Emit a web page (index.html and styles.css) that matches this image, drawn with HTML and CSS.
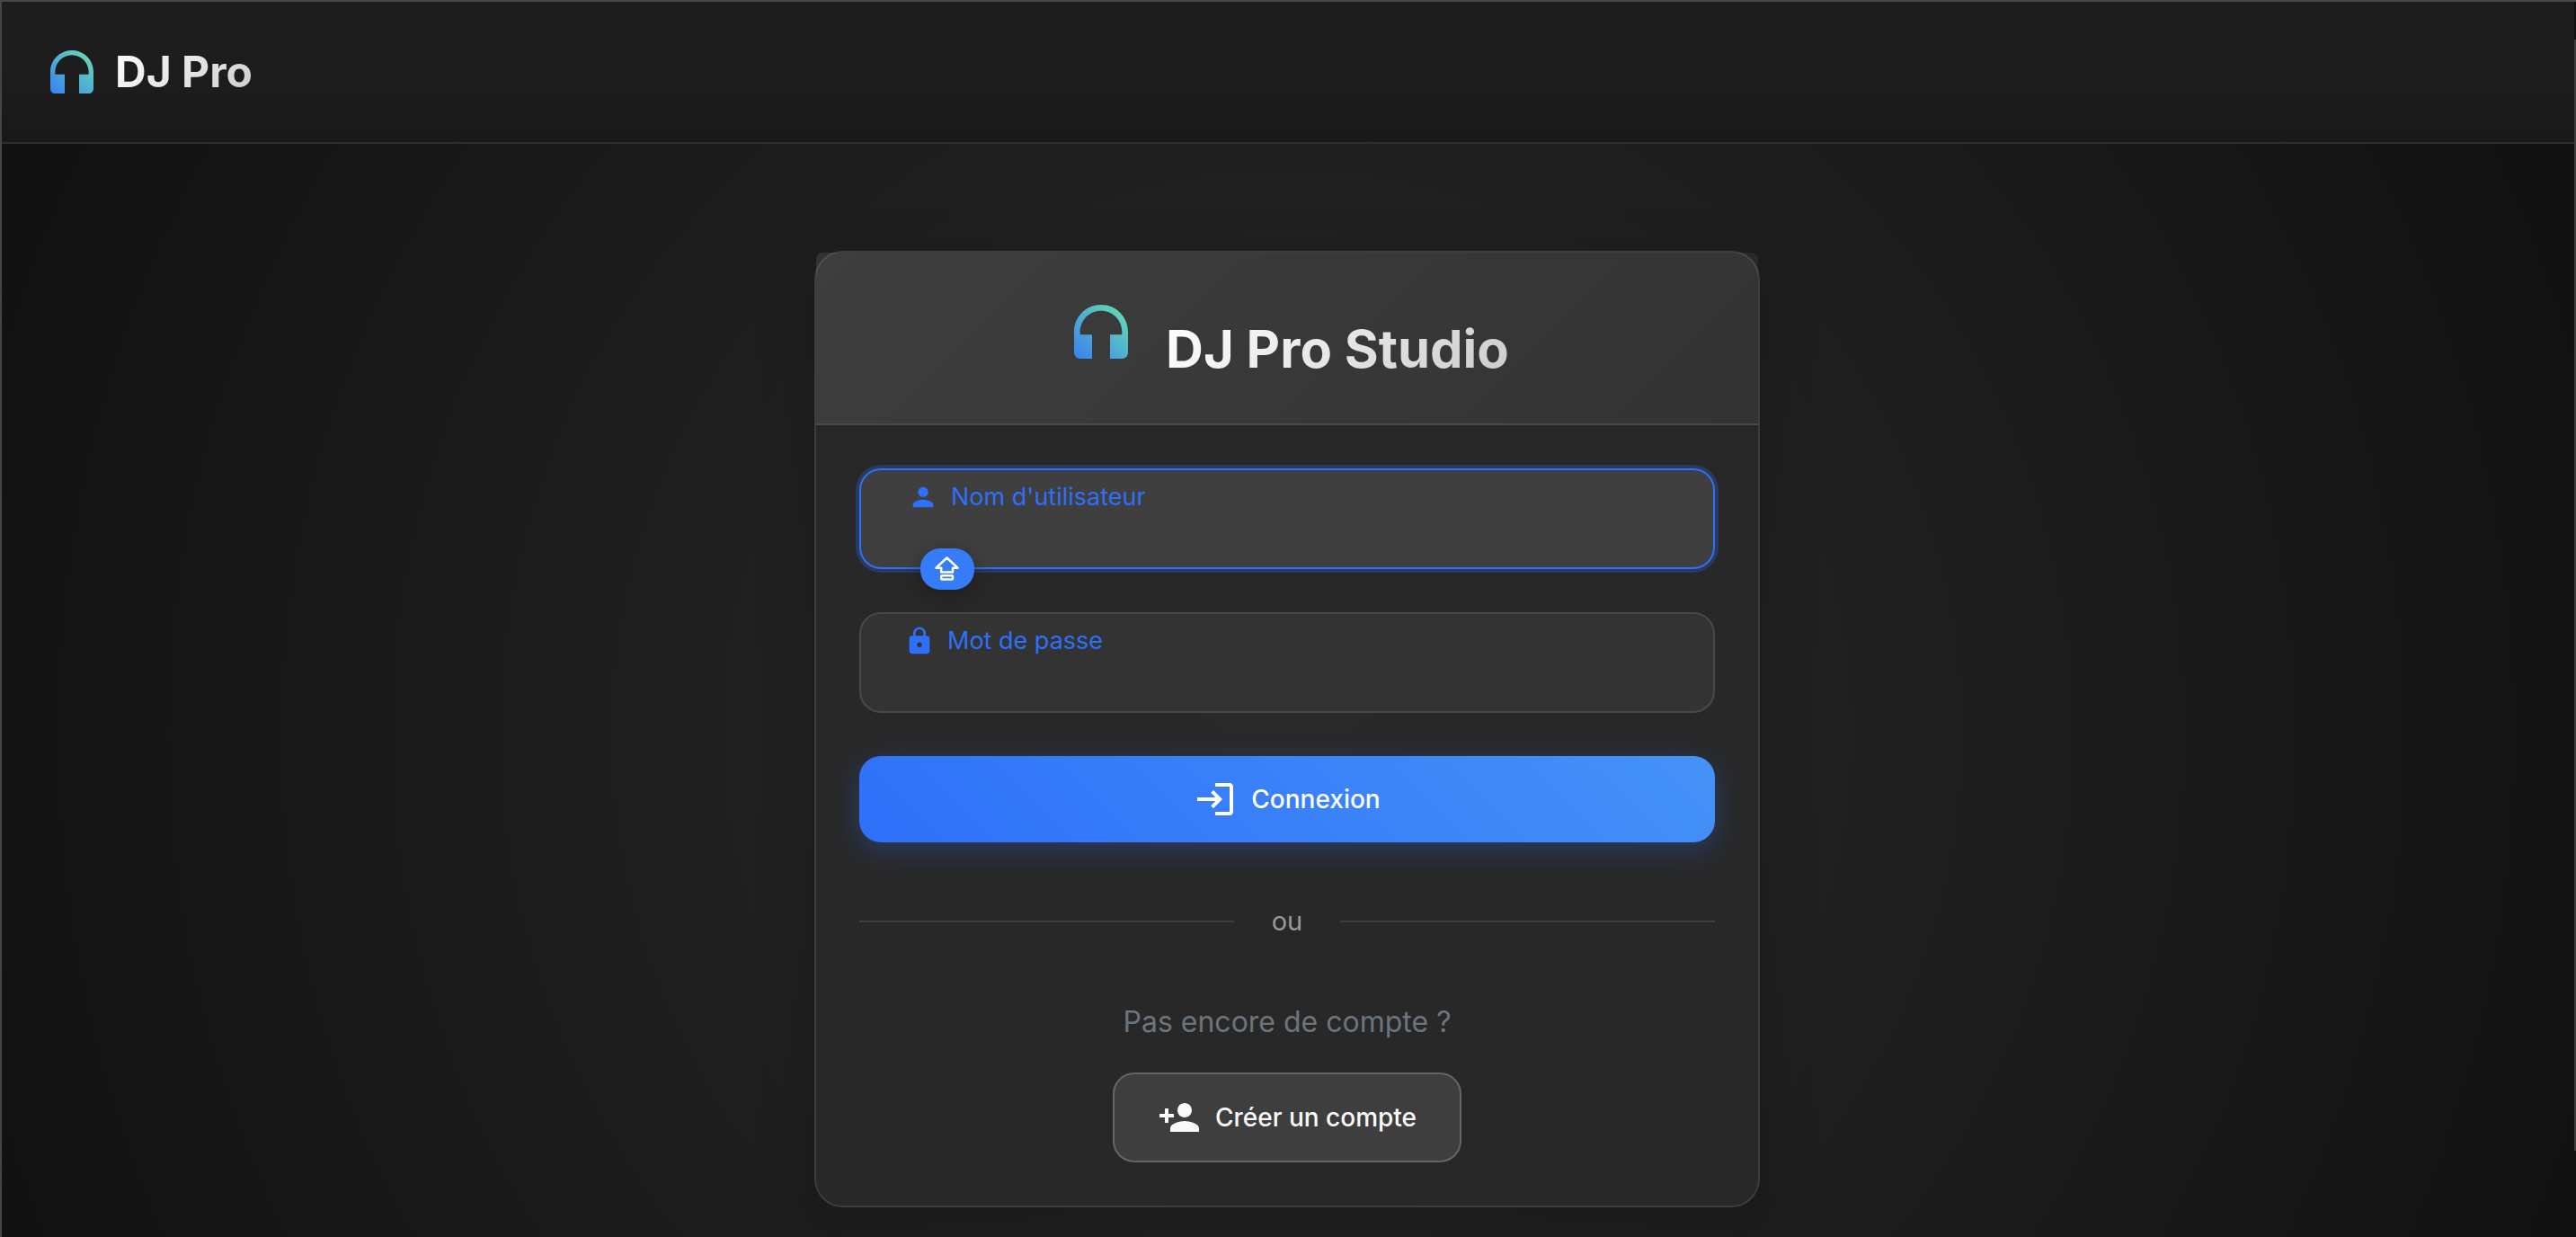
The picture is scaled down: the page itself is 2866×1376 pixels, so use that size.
FILE: index.html
```html
<!DOCTYPE html>
<html lang="fr">
<head>
<meta charset="utf-8">
<meta name="viewport" content="width=device-width, initial-scale=1">
<title>DJ Pro</title>
<link rel="stylesheet" href="styles.css">
</head>
<body>
<svg class="defs" width="0" height="0" aria-hidden="true">
  <defs>
    <linearGradient id="brand" x1="0" y1="1" x2="1" y2="0">
      <stop offset="0" stop-color="#3880f2"/>
      <stop offset="1" stop-color="#68e2ae"/>
    </linearGradient>
    <symbol id="headphones" viewBox="0 0 24 24">
      <path fill="url(#brand)" d="M12 3c-4.97 0-9 4.03-9 9v7c0 1.1.9 2 2 2h4v-8H5v-1c0-3.87 3.13-7 7-7s7 3.13 7 7v1h-4v8h4c1.1 0 2-.9 2-2v-7c0-4.97-4.03-9-9-9z"/>
    </symbol>
  </defs>
</svg>

<header class="topbar">
  <a class="brand" href="#">
    <svg class="brand-icon" aria-hidden="true"><use href="#headphones"/></svg>
    <span class="brand-name">DJ Pro</span>
  </a>
</header>

<main class="page">
  <section class="card">
    <div class="card-header">
      <svg class="card-icon" aria-hidden="true"><use href="#headphones"/></svg>
      <h1 class="card-title">DJ Pro Studio</h1>
    </div>
    <div class="card-body">
      <form class="form">
        <div class="field field-active">
          <input class="input" id="username" type="text" autocomplete="off">
          <label class="label" for="username">
            <svg class="label-icon" viewBox="0 0 24 24" aria-hidden="true"><path d="M12 12c2.21 0 4-1.79 4-4s-1.79-4-4-4-4 1.79-4 4 1.79 4 4 4zm0 2c-2.67 0-8 1.34-8 4v2h16v-2c0-2.66-5.33-4-8-4z"/></svg>
            Nom d'utilisateur
          </label>
          <span class="caps">
            <svg class="caps-icon" viewBox="0 0 28 28" aria-hidden="true"><path d="M13.500 1.500 25.500 12.700H20v4.800H7.200v-4.800H1.500z"/><rect x="7.200" y="21.200" width="12.800" height="4.400" rx="1"/></svg>
          </span>
        </div>
        <div class="field">
          <input class="input" id="password" type="password" autocomplete="off">
          <label class="label" for="password">
            <svg class="label-icon" viewBox="0 0 24 24" aria-hidden="true"><path d="M18 8h-1V6c0-2.760-2.240-5-5-5S7 3.240 7 6v2H6c-1.100 0-2 .9-2 2v10c0 1.100.9 2 2 2h12c1.100 0 2-.9 2-2V10c0-1.100-.9-2-2-2zm-6 9c-1.100 0-2-.9-2-2s.9-2 2-2 2 .9 2 2-.9 2-2 2zm3.100-9H8.900V6c0-1.710 1.390-3.100 3.100-3.100s3.100 1.390 3.100 3.100v2z"/></svg>
            Mot de passe
          </label>
        </div>
        <button class="btn btn-primary" type="submit">
          <svg class="btn-icon" viewBox="0 0 24 24" aria-hidden="true"><path d="M11 7 9.600 8.400l2.600 2.600H2v2h10.200l-2.600 2.600L11 17l5-5zM20 19h-8v2h8c1.100 0 2-.9 2-2V5c0-1.100-.9-2-2-2h-8v2h8z"/></svg>
          Connexion
        </button>
      </form>
      <div class="divider"><span class="divider-text">ou</span></div>
      <div class="signup">
        <p class="signup-text">Pas encore de compte ?</p>
        <button class="btn btn-secondary" type="button">
          <svg class="btn-icon" viewBox="0 0 24 24" aria-hidden="true"><path d="M15 12c2.210 0 4-1.790 4-4s-1.790-4-4-4-4 1.790-4 4 1.790 4 4 4zm-9-2V7H4v3H1v2h3v3h2v-3h3v-2zm9 4c-2.670 0-8 1.340-8 4v2h16v-2c0-2.660-5.330-4-8-4z"/></svg>
          Créer un compte
        </button>
      </div>
    </div>
  </section>
</main>
</body>
</html>
```
FILE: styles.css
```css
*,
*::before,
*::after {
  box-sizing: border-box;
}

html {
  height: 100%;
}

body {
  display: flex;
  flex-direction: column;
  min-height: 100%;
  margin: 0;
  padding-right: 2px;
  background: #111111;
  color: #f8f9fa;
  font-family: Inter, "Liberation Sans", sans-serif;
}

/* Thin window frame laid over the page */
body::after {
  content: "";
  position: fixed;
  inset: 0;
  background:
    linear-gradient(#434a43, #434a43) top / 100% 2px no-repeat,
    linear-gradient(#454545, #454545) left / 2px 100% no-repeat,
    linear-gradient(transparent 44px, #3c3c3c 44px, #3c3c3c calc(100% - 96px), transparent calc(100% - 96px)) right / 2px 100% no-repeat;
  pointer-events: none;
}

.defs {
  position: absolute;
}

.topbar {
  display: flex;
  align-items: center;
  padding: 48px 48px 46px;
  border-bottom: 2px solid #2f2f2f;
  background: linear-gradient(#1d1d1d 50%, #191919);
}

.brand {
  display: flex;
  align-items: center;
  gap: 16px;
  color: inherit;
  text-decoration: none;
}

.brand-icon {
  width: 64px;
  height: 64px;
}

.brand-name,
.card-title {
  background: linear-gradient(135deg, #ffffff, #cccccc);
  background-clip: text;
  color: transparent;
}

.brand-name {
  font-size: 48px;
  font-weight: 700;
  line-height: 64px;
}

.page {
  flex: 1;
  display: flex;
  justify-content: center;
  align-items: flex-start;
  padding: 119px 32px 32px;
  background: radial-gradient(circle at 50% 54%, #292929, #111111);
}

.card {
  width: 100%;
  max-width: 1052px;
  border: 2px solid #3d3d3d;
  border-radius: 32px;
  background: rgba(41, 41, 41, 0.9);
  box-shadow: 0 16px 64px rgba(0, 0, 0, 0.2);
}

.card-header {
  display: flex;
  justify-content: center;
  gap: 32px;
  padding: 48px;
  border-bottom: 2px solid #4a4a4a;
  border-radius: 8px 8px 0 0;
  background: linear-gradient(135deg, rgba(255, 255, 255, 0.1), rgba(255, 255, 255, 0.05));
}

.card-icon {
  width: 80px;
  height: 80px;
}

.card-title {
  margin: 24px 0 0;
  font-size: 58px;
  font-weight: 700;
  line-height: 70px;
}

.card-body {
  padding: 48px;
}

.form {
  display: flex;
  flex-direction: column;
  gap: 48px;
}

.field {
  position: relative;
}

.input {
  display: block;
  width: 100%;
  height: 112px;
  padding: 48px 48px 16px;
  border: 2px solid #494949;
  border-radius: 24px;
  outline: none;
  background: #333333;
  color: #f8f9fa;
  font: inherit;
  font-size: 32px;
}

.field-active .input {
  border-color: #2e70f9;
  background: #3f3f3f;
  box-shadow: 0 0 0 4px rgba(46, 112, 249, 0.25);
}

.label {
  position: absolute;
  top: 14px;
  left: 50px;
  display: flex;
  align-items: center;
  gap: 14px;
  color: #2e70f9;
  font-size: 27px;
  line-height: 36px;
}

.field-active .label {
  left: 54px;
}

.label-icon {
  width: 34px;
  height: 34px;
  fill: currentColor;
}

.caps {
  position: absolute;
  top: 89px;
  left: 68px;
  display: flex;
  align-items: center;
  justify-content: center;
  width: 60px;
  height: 46px;
  border-radius: 22px;
  background: #367cf8;
  box-shadow: 0 4px 24px rgba(0, 0, 0, 0.3);
}

.caps-icon {
  width: 28px;
  height: 28px;
  fill: none;
  stroke: #ffffff;
  stroke-width: 2.5;
  stroke-linejoin: round;
}

.btn {
  display: flex;
  align-items: center;
  justify-content: center;
  gap: 16px;
  border-radius: 24px;
  color: #ffffff;
  font-family: inherit;
  font-size: 28px;
  font-weight: 500;
  line-height: 48px;
}

.btn-primary {
  padding: 24px 48px;
  border: 0;
  background: linear-gradient(45deg, #2e70f9, #4592f8);
  box-shadow: 0 8px 32px rgba(46, 112, 249, 0.3);
}

.btn-secondary {
  padding: 24px 48px;
  border: 2px solid #666666;
  background: #3e3e3e;
  color: #f8f9fa;
}

.btn-icon {
  width: 48px;
  height: 48px;
  fill: currentColor;
}

.divider {
  display: flex;
  align-items: center;
  gap: 10px;
  margin: 64px 0;
}

.divider::before,
.divider::after {
  content: "";
  flex: 1;
  height: 2px;
  background: #3f3f3f;
}

.divider-text {
  padding: 0 32px;
  color: #999999;
  font-size: 29px;
  line-height: 48px;
}

.signup {
  display: flex;
  flex-direction: column;
  align-items: center;
  gap: 32px;
}

.signup-text {
  margin: 0;
  color: #6c757d;
  font-size: 32px;
  line-height: 48px;
}
```
